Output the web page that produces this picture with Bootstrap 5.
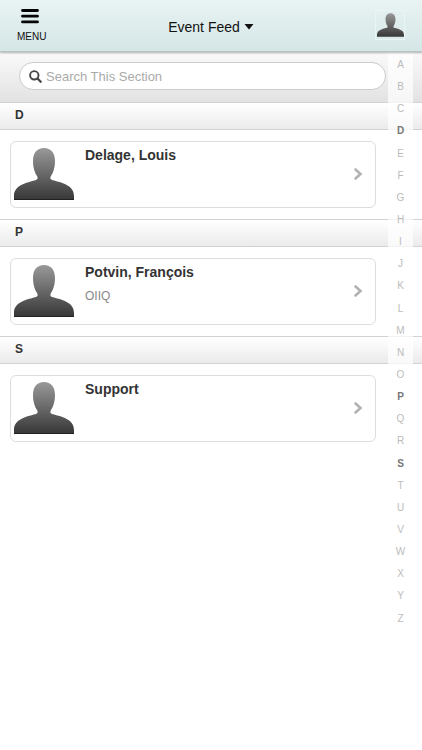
<!DOCTYPE html>
<html lang="en">
<head>
<meta charset="utf-8">
<meta name="viewport" content="width=device-width, initial-scale=1">
<title>Event Feed</title>
<link href="https://cdn.jsdelivr.net/npm/bootstrap@5.3.0/dist/css/bootstrap.min.css" rel="stylesheet">
<style>
  body { font-family: "Liberation Sans", Arial, sans-serif; color: #333; background: #fff; }
  .topbar { height: 52px; padding: 0 17px; background: linear-gradient(#e9f3f3, #d5e6e6); border-bottom: 1px solid #b9c3c3; box-shadow: 0 1px 2px rgba(0,0,0,.3); z-index: 3; }
  .topbar button { color: #111; line-height: 16px; }
  .topbar-side { flex: 1 1 0; }
  .menu-icon { margin-bottom: 7px; margin-left: 3px; }
  .menu-label { font-size: 10px; line-height: 12px; }
  .feed-title { font-size: 14px; padding-top: 2px !important; }
  .user-btn { width: 30px; height: 30px; border: 1px solid #eaf5f5 !important; margin-top: -1px; }
  .search-area { padding: 10px 36px 12px 19px; background: linear-gradient(#fafafa, #e2e2e2); }
  .search-pill { height: 28px; padding: 0 9px; border: 1px solid #ccc; background: #fff; }
  .search-pill input { font-size: 13px; line-height: 18px; padding-top: 2px !important; outline: 0; color: #333; }
  .search-pill input::placeholder { color: #aaa; opacity: 1; }
  .group-title { font-size: 12px; line-height: 24px; padding: 0 15px 2px; color: #333; border: solid #d2d2d2; border-width: 1px 0; background: linear-gradient(#fff, #ebebeb); }
  .group-body { padding: 11px 46px 11px 10px; }
  .person { height: 67px; padding: 0 12px 2px 3px; border: 1px solid #ddd; border-radius: 6px; color: #333; background: #fff; }
  .person-photo { margin-top: 5px; }
  .person-text { padding: 4px 0 0 11px; }
  .person-name { font-size: 14px; line-height: 18px; }
  .person-org { font-size: 12px; line-height: 16px; margin-top: 7px; color: #888; }
  .letters { top: 0; right: 9px; width: 25px; height: 578px; padding-top: 2px; background: rgba(255,255,255,.7); z-index: 2; }
  .letters a { font-size: 10px; line-height: 12px; color: #bbb; }
  .letters a.active { color: #777; font-weight: bold; }
</style>
<script src="https://cdn.jsdelivr.net/npm/bootstrap@5.3.0/dist/js/bootstrap.bundle.min.js" defer></script>
</head>
<body class="d-flex flex-column min-vh-100">
<svg class="position-absolute" width="0" height="0" aria-hidden="true">
  <defs>
    <linearGradient id="shade" x1="0" y1="0" x2="0" y2="1"><stop offset="0" stop-color="#999"/><stop offset="1" stop-color="#373737"/></linearGradient>
  </defs>
</svg>

<header class="topbar d-flex align-items-center position-relative">
  <div class="topbar-side d-flex">
    <button type="button" class="btn p-0 border-0 rounded-0 d-flex flex-column">
      <svg class="menu-icon" width="20" height="16" viewBox="0 0 20 16" aria-hidden="true"><path d="M2.500 2.500h15M2.500 8.200h15M2.500 13.900h15" stroke="#050505" stroke-width="2.800" stroke-linecap="round"/></svg>
      <span class="menu-label">MENU</span>
    </button>
  </div>
  <button type="button" class="btn p-0 border-0 feed-title d-flex align-items-center gap-1">Event Feed
    <svg width="10" height="8" viewBox="0 0 10 8" aria-hidden="true"><path d="M.5 1h9L5 6.500z" fill="#111"/></svg>
  </button>
  <div class="topbar-side d-flex justify-content-end">
    <button type="button" class="btn user-btn p-0 rounded-0 d-flex align-items-center justify-content-center" aria-label="My profile">
      <svg width="27" height="24" viewBox="0 0 60 52" aria-hidden="true"><path fill="url(#shade)" d="M30 0c7 0 11 5 11 13 0 7-2 12-4 15-1 2-1 3 1 4 12 3 22 6 22 16v4H0v-4C0 38 10 35 22 32c2-1 2-2 1-4-2-3-4-8-4-15C19 5 23 0 30 0z"/></svg>
    </button>
  </div>
</header>

<main class="position-relative flex-fill">
  <form class="search-area" role="search">
    <div class="search-pill d-flex align-items-center gap-1 rounded-pill">
      <svg class="flex-shrink-0" width="13" height="13" viewBox="0 0 13 13" fill="none" stroke="#444" aria-hidden="true"><circle cx="5.300" cy="5.300" r="4.200" stroke-width="1.900"/><path d="M8.500 8.500l3.200 3.200" stroke-width="2.300" stroke-linecap="round"/></svg>
      <input type="search" class="border-0 bg-transparent p-0 flex-fill w-100" placeholder="Search This Section" aria-label="Search This Section">
    </div>
  </form>

  <section id="group-d">
    <h2 class="group-title fw-bold m-0">D</h2>
    <div class="group-body">
      <a href="#delage" class="person d-flex text-decoration-none">
        <svg class="person-photo flex-shrink-0" width="60" height="54" viewBox="0 0 60 54" aria-hidden="true"><path fill="url(#shade)" d="M30 1c7 0 11 5 11 13 0 7-2 12-4 15-1 2-1 3 1 4 12 3 22 6 22 16v4H0v-4c0-10 10-13 22-16 2-1 2-2 1-4-2-3-4-8-4-15C19 6 23 1 30 1z"/><path d="M0 52.500h60" stroke="#222"/></svg>
        <div class="person-text flex-fill"><div class="person-name fw-bold">Delage, Louis</div></div>
        <svg class="align-self-center" width="10" height="14" viewBox="0 0 10 14" aria-hidden="true"><path d="M2.500 2.500L7.500 7l-5 4.500" fill="none" stroke="#b2b2b2" stroke-width="2.600" stroke-linecap="round"/></svg>
      </a>
    </div>
  </section>

  <section id="group-p">
    <h2 class="group-title fw-bold m-0">P</h2>
    <div class="group-body">
      <a href="#potvin" class="person d-flex text-decoration-none">
        <svg class="person-photo flex-shrink-0" width="60" height="54" viewBox="0 0 60 54" aria-hidden="true"><path fill="url(#shade)" d="M30 1c7 0 11 5 11 13 0 7-2 12-4 15-1 2-1 3 1 4 12 3 22 6 22 16v4H0v-4c0-10 10-13 22-16 2-1 2-2 1-4-2-3-4-8-4-15C19 6 23 1 30 1z"/><path d="M0 52.500h60" stroke="#222"/></svg>
        <div class="person-text flex-fill"><div class="person-name fw-bold">Potvin, François</div><div class="person-org">OIIQ</div></div>
        <svg class="align-self-center" width="10" height="14" viewBox="0 0 10 14" aria-hidden="true"><path d="M2.500 2.500L7.500 7l-5 4.500" fill="none" stroke="#b2b2b2" stroke-width="2.600" stroke-linecap="round"/></svg>
      </a>
    </div>
  </section>

  <section id="group-s">
    <h2 class="group-title fw-bold m-0">S</h2>
    <div class="group-body">
      <a href="#support" class="person d-flex text-decoration-none">
        <svg class="person-photo flex-shrink-0" width="60" height="54" viewBox="0 0 60 54" aria-hidden="true"><path fill="url(#shade)" d="M30 1c7 0 11 5 11 13 0 7-2 12-4 15-1 2-1 3 1 4 12 3 22 6 22 16v4H0v-4c0-10 10-13 22-16 2-1 2-2 1-4-2-3-4-8-4-15C19 6 23 1 30 1z"/><path d="M0 52.500h60" stroke="#222"/></svg>
        <div class="person-text flex-fill"><div class="person-name fw-bold">Support</div></div>
        <svg class="align-self-center" width="10" height="14" viewBox="0 0 10 14" aria-hidden="true"><path d="M2.500 2.500L7.500 7l-5 4.500" fill="none" stroke="#b2b2b2" stroke-width="2.600" stroke-linecap="round"/></svg>
      </a>
    </div>
  </section>

  <nav class="letters position-absolute d-flex flex-column justify-content-around text-center" aria-label="Jump to letter">
    <a class="text-decoration-none" href="#group-a">A</a>
    <a class="text-decoration-none" href="#group-b">B</a>
    <a class="text-decoration-none" href="#group-c">C</a>
    <a class="text-decoration-none active" href="#group-d">D</a>
    <a class="text-decoration-none" href="#group-e">E</a>
    <a class="text-decoration-none" href="#group-f">F</a>
    <a class="text-decoration-none" href="#group-g">G</a>
    <a class="text-decoration-none" href="#group-h">H</a>
    <a class="text-decoration-none" href="#group-i">I</a>
    <a class="text-decoration-none" href="#group-j">J</a>
    <a class="text-decoration-none" href="#group-k">K</a>
    <a class="text-decoration-none" href="#group-l">L</a>
    <a class="text-decoration-none" href="#group-m">M</a>
    <a class="text-decoration-none" href="#group-n">N</a>
    <a class="text-decoration-none" href="#group-o">O</a>
    <a class="text-decoration-none active" href="#group-p">P</a>
    <a class="text-decoration-none" href="#group-q">Q</a>
    <a class="text-decoration-none" href="#group-r">R</a>
    <a class="text-decoration-none active" href="#group-s">S</a>
    <a class="text-decoration-none" href="#group-t">T</a>
    <a class="text-decoration-none" href="#group-u">U</a>
    <a class="text-decoration-none" href="#group-v">V</a>
    <a class="text-decoration-none" href="#group-w">W</a>
    <a class="text-decoration-none" href="#group-x">X</a>
    <a class="text-decoration-none" href="#group-y">Y</a>
    <a class="text-decoration-none" href="#group-z">Z</a>
  </nav>
</main>
</body>
</html>
